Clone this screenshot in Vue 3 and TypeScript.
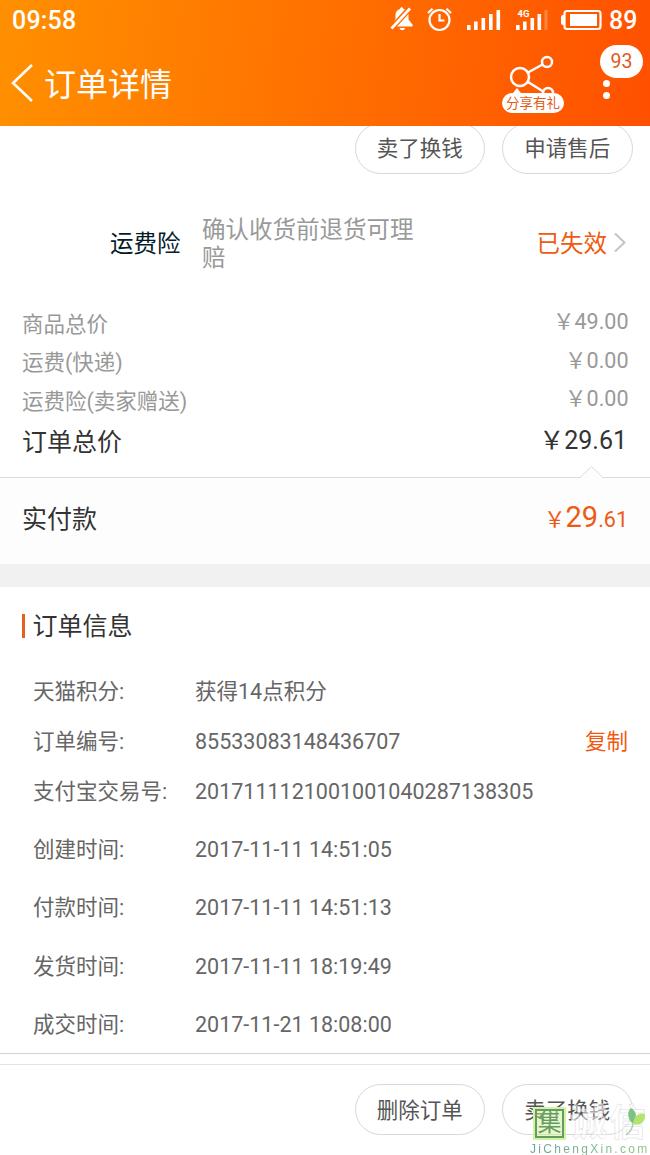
<script setup lang="ts">
interface Row {
  label: string
  value: string
  size?: 'tall' | 'first'
  cjk?: boolean
  copy?: boolean
}

const prices: Row[] = [
  { label: '商品总价', value: '￥49.00' },
  { label: '运费(快递)', value: '￥0.00' },
  { label: '运费险(卖家赠送)', value: '￥0.00' },
]

const details: Row[] = [
  { label: '天猫积分:', value: '获得14点积分', cjk: true },
  { label: '订单编号:', value: '85533083148436707', copy: true },
  { label: '支付宝交易号:', value: '2017111121001001040287138305' },
  { label: '创建时间:', value: '2017-11-11 14:51:05', size: 'first' },
  { label: '付款时间:', value: '2017-11-11 14:51:13', size: 'tall' },
  { label: '发货时间:', value: '2017-11-11 18:19:49', size: 'tall' },
  { label: '成交时间:', value: '2017-11-21 18:08:00', size: 'tall' },
]
</script>

<template>
  <div class="screen">
    <header class="header">
      <div class="status">
        <span class="clock">09:58</span>
        <svg class="status-icons" width="220" height="34" viewBox="0 0 220 34">
          <g fill="#fff">
            <path d="M0.500 27.500 L19 7.500 L21 9.500 L2.500 29.500Z" />
            <path d="M4 21.500 L5.500 19 V15 C5.500 11.500 8 9.500 10 9 C10.500 6.500 13 6.500 13.500 9 L15 9.500Z" />
            <path d="M7 26.500 L18.500 14 V19.500 L22.500 24.500 V26.500Z" />
            <path d="M9.500 28 H15 C14.500 31 10 31 9.500 28Z" />
          </g>
          <g fill="none" stroke="#fff" stroke-width="2.200">
            <circle cx="49.500" cy="20" r="10" />
            <path d="M49.500 14 V20.500 H54.500" />
            <path d="M38 13 L42.500 8.800 M56.500 8.800 L61 13" />
          </g>
          <g fill="#fff">
            <rect x="77" y="25" width="3.600" height="5" />
            <rect x="84" y="21.500" width="3.600" height="8.500" />
            <rect x="91.500" y="18" width="3.600" height="12" />
            <rect x="99" y="14" width="3.600" height="16" />
            <rect x="106.500" y="10" width="3.600" height="20" />
            <rect x="126" y="25" width="3.600" height="5" />
            <rect x="133" y="21.500" width="3.600" height="8.500" />
            <rect x="140.500" y="18" width="3.600" height="12" />
            <rect x="147.500" y="14" width="3.600" height="16" />
            <rect x="154.500" y="10" width="3" height="20" opacity=".25" />
            <text x="127.500" y="17" class="net">4G</text>
            <rect x="180" y="14" width="27" height="12" />
            <path d="M174 15 H173 Q171 15 171 17 V23 Q171 25 173 25 H174Z" />
          </g>
          <rect x="174.500" y="11" width="36" height="18" rx="2.500" fill="none" stroke="#fff" stroke-width="2.200" />
        </svg>
        <span class="battery">89</span>
      </div>
      <div class="titlebar">
        <svg class="back" width="24" height="40" viewBox="0 0 24 40">
          <path d="M22 2 L3 20 L22 38" fill="none" stroke="#fff" stroke-width="2.600" />
        </svg>
        <h1>订单详情</h1>
        <div class="share">
          <svg width="62" height="44" viewBox="0 0 62 44">
            <g fill="none" stroke="#fff" stroke-width="2.500">
              <circle cx="18" cy="22" r="9" />
              <circle cx="45" cy="7" r="5" />
              <circle cx="46" cy="38" r="5" />
              <path d="M26 17.500 L40.500 9.500 M26 27 L42 37" />
            </g>
            <path d="M11 38 L15 33 L19 38Z" fill="#fff" />
          </svg>
          <span class="share-label">分享有礼</span>
        </div>
        <div class="more">
          <span class="badge">93</span>
          <i></i><i></i>
        </div>
      </div>
    </header>

    <div class="actions top">
      <button>卖了换钱</button>
      <button>申请售后</button>
    </div>

    <section class="insurance">
      <span class="ins-name">运费险</span>
      <span class="ins-text">确认收货前退货可理赔</span>
      <span class="ins-state">已失效</span>
      <svg width="14" height="22" viewBox="0 0 14 22">
        <path d="M2 0.500 L11.500 9.500 L2 18.500" fill="none" stroke="#c4c4c4" stroke-width="2" />
      </svg>
    </section>

    <section class="prices">
      <div v-for="p in prices" :key="p.label" class="price">
        <span>{{ p.label }}</span><span class="amount">{{ p.value }}</span>
      </div>
      <div class="price total">
        <span>订单总价</span><span class="amount">￥29.61</span>
      </div>
    </section>

    <section class="paid">
      <svg class="notch" width="26" height="14" viewBox="0 0 26 14">
        <path d="M1 13 L12.500 1.500 L24 13 V14 H1Z" fill="#fdfdfd" />
        <path d="M1 12.500 L12.500 1.500 L24 12.500" fill="none" stroke="#dcdcdc" />
      </svg>
      <span>实付款</span>
      <span class="pay"><span>￥</span><b>29</b>.61</span>
    </section>

    <section class="info">
      <h2>订单信息</h2>
      <div v-for="d in details" :key="d.label" class="detail" :class="d.size">
        <span class="key">{{ d.label }}</span>
        <span class="val" :class="{ cjk: d.cjk }">{{ d.value }}</span>
        <a v-if="d.copy">复制</a>
      </div>
    </section>

    <footer class="footer">
      <div class="actions">
        <button>删除订单</button>
        <button>卖了换钱</button>
      </div>
      <div class="watermark">
        <div class="mark-row">
          <span class="seal">集</span>
          <span class="outline">诚信</span>
          <svg class="leaf" width="22" height="30" viewBox="0 0 22 30">
            <path d="M8 17 C2 12 2 4 6 1 C11 4 13 9 8 17Z" fill="#7cc383" />
            <path d="M8 17 C9 9 14 5 20 7 C21 14 16 19 8 17Z" fill="#b5e36f" />
            <path d="M8 17 Q7 24 1 28" fill="none" stroke="#a5cfa5" stroke-width="1.500" />
          </svg>
        </div>
        <span class="site">JiChengXin.com</span>
      </div>
    </footer>
  </div>
</template>

<style>
body {
  margin: 0;
  background: #fff;
}
</style>

<style scoped>
.screen {
  width: 650px;
  height: 1155px;
  overflow: hidden;
  display: flex;
  flex-direction: column;
  background: #fff;
  font-family: Roboto, "Noto Sans CJK SC", sans-serif;
  font-weight: 400;
  font-size: 21.5px;
  color: #666;
}
.header {
  height: 126px;
  flex: none;
  color: #fff;
  background: linear-gradient(97deg, #ff9000 0%, #ff5000 100%);
  position: relative;
  z-index: 1;
}
.status {
  height: 40px;
  display: flex;
  align-items: center;
  padding: 0 13px 0 12px;
  font-size: 25px;
  font-weight: 500;
}
.clock {
  flex: 1;
  letter-spacing: 0.2px;
}
.status-icons {
  margin: -6px -1px 0 0;
}
.net {
  font-size: 9.5px;
  font-weight: 700;
}
.battery {
  width: 28px;
}
.titlebar {
  height: 86px;
  display: flex;
  align-items: center;
}
.back {
  margin: 0 0 0 10px;
}
h1 {
  flex: 1;
  margin: 3px 0 0 10px;
  font-size: 32px;
  font-weight: 400;
  line-height: 48px;
}
.share {
  width: 62px;
  height: 62px;
  display: flex;
  flex-direction: column;
  margin: 5px 36px 0 0;
}
.share svg {
  flex: none;
}
.share-label {
  height: 20px;
  margin-top: -6px;
  border-radius: 10px;
  background: #fff;
  color: #e35a14;
  font-size: 13.5px;
  line-height: 20px;
  text-align: center;
  z-index: 1;
}
.more {
  width: 44px;
  display: flex;
  flex-direction: column;
  gap: 5px;
  margin: -23px 6px 0 0;
}
.badge {
  width: 43px;
  height: 33px;
  border-radius: 17px;
  background: #fff;
  color: #e35a1c;
  font-size: 19.5px;
  line-height: 34px;
  text-align: center;
  margin-bottom: -3px;
}
.more i {
  width: 7px;
  height: 7px;
  border-radius: 50%;
  background: #fff;
  margin-left: 3px;
}
.actions {
  display: flex;
  justify-content: flex-end;
  gap: 17px;
  padding-right: 17.5px;
}
.actions button {
  box-sizing: border-box;
  width: 130.5px;
  height: 51px;
  padding: 0;
  border: 1px solid #d8d8d8;
  border-radius: 26px;
  background: #fff;
  color: #555;
  font: inherit;
  line-height: 49px;
}
.actions.top {
  margin-top: -3px;
}
.insurance {
  height: 126px;
  box-sizing: border-box;
  padding: 3px 23px 0 110px;
  margin-top: 5px;
  display: flex;
  align-items: center;
  font-size: 23.5px;
  line-height: 28px;
}
.ins-name {
  width: 92px;
  color: #051b28;
}
.ins-text {
  width: 216px;
  color: #999;
}
.ins-state {
  flex: 1;
  text-align: right;
  color: #f0590f;
  margin-right: 6px;
}
.prices {
  box-sizing: border-box;
  height: 174px;
  margin-top: -2px;
  color: #999;
}
.price {
  height: 38.5px;
  display: flex;
  align-items: center;
  justify-content: space-between;
  padding: 0 21.5px 0 22px;
}
.amount {
  position: relative;
  top: -2.5px;
}
.price.total {
  height: 43px;
  padding-right: 23px;
  font-size: 25px;
  color: #333;
}
.paid {
  height: 87px;
  box-sizing: border-box;
  border-top: 1px solid #dcdcdc;
  background: #fdfdfd;
  display: flex;
  align-items: center;
  justify-content: space-between;
  padding: 0 22px 9px 22px;
  font-size: 25px;
  color: #333;
  position: relative;
}
.notch {
  position: absolute;
  top: -13px;
  right: 45px;
}
.pay {
  color: #ee5a16;
  font-size: 21.5px;
}
.pay b {
  font-size: 29px;
  font-weight: 400;
}
.info {
  border-top: 23px solid #f1f1f1;
  height: 466px;
  padding: 0 22px;
  border-bottom: 1px solid #d2d2d2;
}
h2 {
  margin: 27px 0 28px;
  font-size: 25px;
  font-weight: 400;
  line-height: 26px;
  color: #333;
  border-left: 3px solid #e8601f;
  padding-left: 7.5px;
  height: 24px;
}
.detail {
  height: 50px;
  display: flex;
  align-items: center;
  padding-left: 11px;
}
.detail.first {
  height: 62.5px;
  box-sizing: border-box;
  padding-top: 4px;
}
.detail.tall {
  height: 58.4px;
}
.key,
.val.cjk,
.detail a {
  position: relative;
  top: -2px;
}
.key {
  width: 162px;
}
.val {
  flex: 1;
}
.detail a {
  color: #f0590f;
}
.footer {
  flex: none;
  height: 91px;
  margin-top: 10px;
  border-top: 1px solid #e4e4e4;
  box-sizing: border-box;
  padding-top: 19px;
  position: relative;
}
.footer button {
  line-height: 51px;
}
.watermark {
  position: absolute;
  left: 530px;
  top: 40px;
  width: 120px;
}
.mark-row {
  display: flex;
  height: 37px;
  align-items: center;
  padding-left: 3px;
}
.seal {
  flex: none;
  width: 29px;
  height: 29px;
  box-sizing: border-box;
  border: 2px solid #659c66;
  outline: 2px solid #d3f3a3;
  background: rgba(205, 242, 148, 0.5);
  color: #659c66;
  font-size: 24px;
  line-height: 24px;
  margin-left: 2px;
  display: flex;
  justify-content: center;
}
.outline {
  font-size: 37px;
  line-height: 36px;
  font-weight: 700;
  letter-spacing: 2px;
  color: rgba(255, 255, 255, 0.5);
  -webkit-text-stroke: 0.5px #dcd8dc;
  margin-left: 6px;
  white-space: nowrap;
}
.leaf {
  position: absolute;
  left: 95px;
  top: 2px;
}
.site {
  display: block;
  font-family: "Liberation Sans", sans-serif;
  font-size: 12px;
  line-height: 14px;
  letter-spacing: 2.3px;
  white-space: nowrap;
  background: linear-gradient(90deg, #64a3a3, #8fc777);
  -webkit-background-clip: text;
  background-clip: text;
  color: transparent;
}
</style>
